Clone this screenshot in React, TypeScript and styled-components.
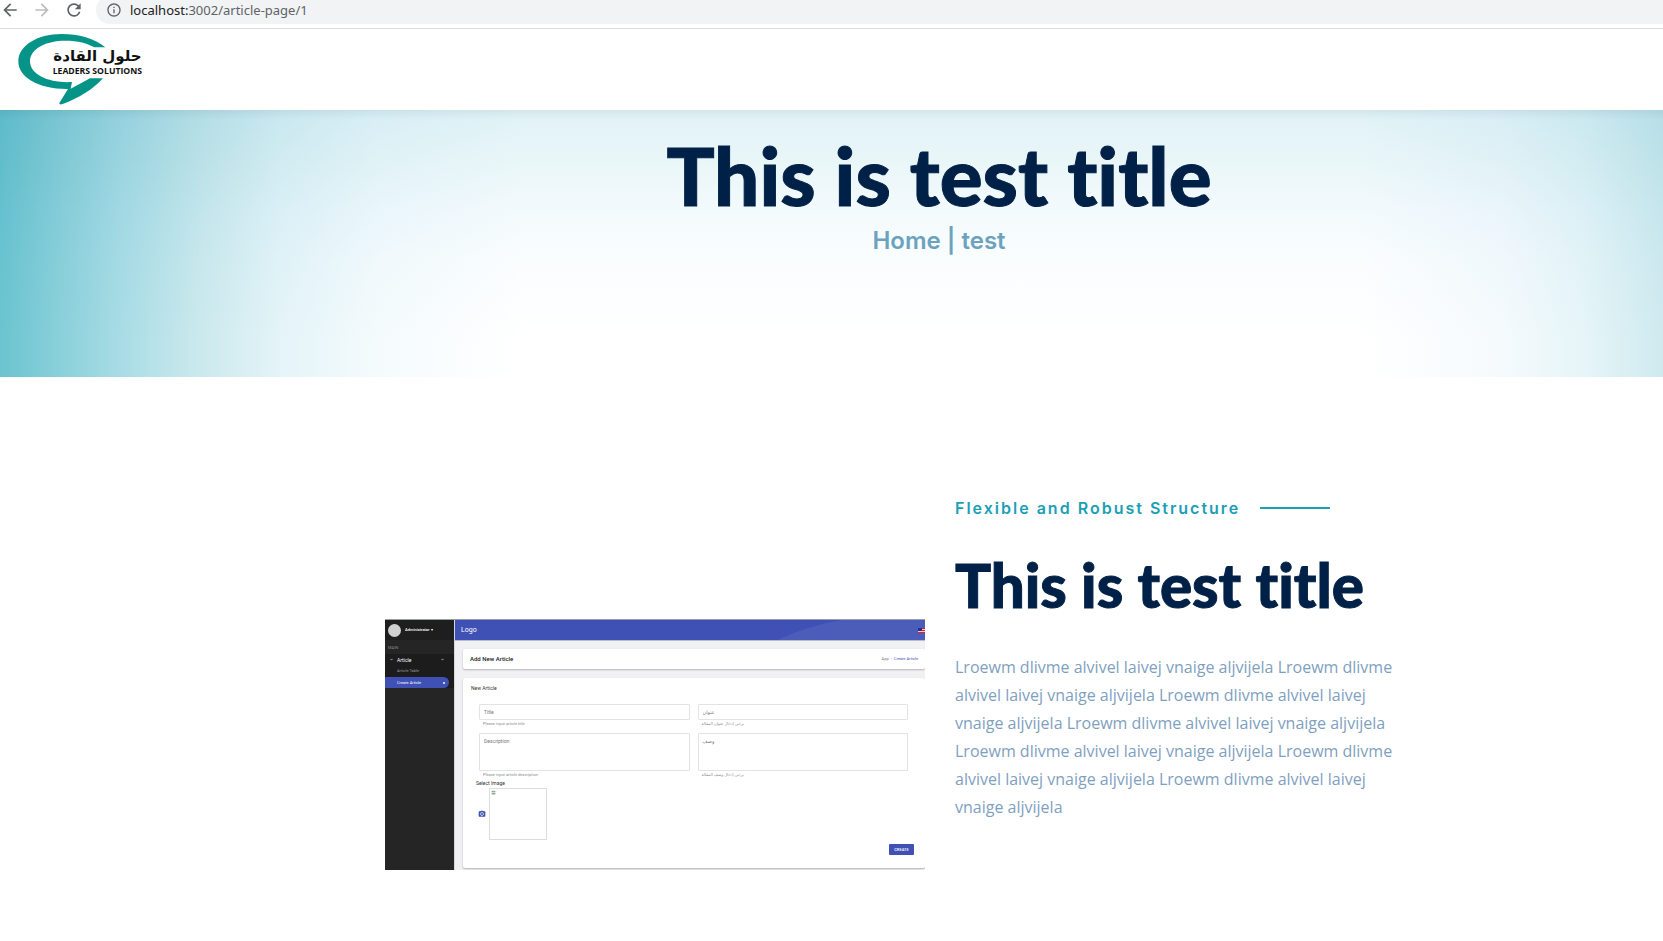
import React from 'react';
import styled, { createGlobalStyle } from 'styled-components';
import {
  MdArrowBack,
  MdArrowForward,
  MdRefresh,
  MdInfoOutline,
  MdPhotoCamera,
  MdKeyboardArrowDown,
  MdBrokenImage,
} from 'react-icons/md';

const GlobalStyle = createGlobalStyle`
  *, *::before, *::after { box-sizing: border-box; }
  body {
    margin: 0;
    background: #fff;
    color: #002147;
    font-family: Inter, "Liberation Sans", sans-serif;
    overflow-x: hidden;
  }
  h1, h2, h3, p, nav, figure { margin: 0; }
  button, input, textarea { font: inherit; }
`;

/* ---------- browser bar ---------- */

const BrowserBar = styled.div`
  display: flex;
  align-items: flex-start;
  height: 29px;
  overflow: hidden;
  border-bottom: 1px solid #dadce0;
`;

const NavButtons = styled.div`
  display: flex;
  gap: 12px;
  width: 96px;
`;

const NavButton = styled.button`
  display: flex;
  padding: 0;
  border: 0;
  background: none;
  color: #5f6368;
  font-size: 20px;
  &:disabled { color: #bbbdc0; }
`;

const AddressBar = styled.div`
  flex: 1;
  display: flex;
  align-items: center;
  gap: 8px;
  height: 28px;
  margin-top: -4px;
  padding-left: 10px;
  border-radius: 14px 0 0 14px;
  background: #f1f3f4;
  color: #5f6368;
  font: 13px/20px "Noto Sans", sans-serif;
  svg { font-size: 16px; }
  b { color: #202124; font-weight: 400; }
`;

/* ---------- site header and hero ---------- */

const SiteHeader = styled.header`
  height: 81px;
`;

const LogoLink = styled.a`
  display: inline-block;
`;

const Hero = styled.section`
  min-height: 267px;
  padding: 25px 0 0 215px;
  text-align: center;
  background:
    linear-gradient(to bottom, rgba(0, 40, 50, 0.06), transparent 10px),
    linear-gradient(to bottom, #e0f2f7, #e9f6f8 50px, #f3fafd 100px, #fafdfe 150px, #fff 230px),
    linear-gradient(to right, #6ac4d0, #8ad0da 60px, #a8dce5 120px, #cbe9ed 200px, #e4f4f8 280px, #f5fbfd 380px, #fff 520px),
    linear-gradient(to left, #cfeaef, #e6f5f8 80px, #f5fafd 160px, #fff 300px);
  background-blend-mode: multiply;
`;

const HeroTitle = styled.h1`
  font: 900 80px/80px Lato, sans-serif;
  font-variant-ligatures: none;
  -webkit-text-stroke: 1px currentColor;
`;

const Breadcrumb = styled.nav`
  margin-top: 12px;
  color: #6ba3be;
  font-size: 24px;
  font-weight: 600;
  line-height: 28px;
  a { color: inherit; text-decoration: none; }
`;

/* ---------- article ---------- */

const ArticleSection = styled.main`
  padding: 119px 0 71px 215px;
`;

const ArticleGrid = styled.article`
  display: grid;
  grid-template-columns: 1fr 1fr;
  align-items: end;
  gap: 30px;
  max-width: 1140px;
  margin: 0 auto;
  padding: 0 14px 0 16px;
`;

const ArticleText = styled.div`
  max-width: 450px;
  padding-bottom: 49px;
`;

const Eyebrow = styled.p`
  display: flex;
  align-items: center;
  gap: 20px;
  color: #1b9fb6;
  font-size: 16px;
  font-weight: 600;
  line-height: 24px;
  letter-spacing: 2px;
  &::after {
    content: "";
    width: 70px;
    height: 2px;
    background: currentColor;
  }
`;

const ArticleTitle = styled.h2`
  margin-top: 29px;
  font: 900 60px/72px Lato, sans-serif;
  font-variant-ligatures: none;
  -webkit-text-stroke: 1px currentColor;
`;

const ArticleBody = styled.p`
  margin-top: 32px;
  color: #7f9fbf;
  font: 16px/28px "Open Sans", sans-serif;
`;

/* ---------- dashboard preview ---------- */

const Preview = styled.figure`
  display: grid;
  grid-template-columns: 69px 1fr;
  height: 251px;
  overflow: hidden;
  border-top: 1px solid #9a9dab;
  background: #f1f1f3;
  color: #333;
  font: 5px/6px Roboto, sans-serif;
`;

const Sidebar = styled.aside`
  background: #252525;
  color: #ddd;
`;

const Profile = styled.div`
  display: flex;
  align-items: center;
  gap: 4px;
  height: 20px;
  padding-left: 3px;
  background: #1e1e1e;
  color: #fff;
  font-weight: 500;
  font-size: 4px;
`;

const Avatar = styled.span`
  width: 13px;
  height: 13px;
  border-radius: 50%;
  background: #d0d0d0;
`;

const MenuHeading = styled.p`
  height: 14px;
  padding: 5px 3px;
  color: #8a8a8a;
  font-size: 4px;
  line-height: 6px;
`;

const MenuGroup = styled.div`
  background: #1c1c1c;
`;

const MenuItem = styled.a<{ $kind?: 'parent' | 'active' }>`
  display: flex;
  align-items: center;
  justify-content: space-between;
  height: ${(p) => (p.$kind ? 11 : 12)}px;
  margin-right: 5px;
  padding: 0 4px 0 12px;
  color: ${(p) => (p.$kind ? '#fff' : '#9a9a9a')};
  background: ${(p) => (p.$kind === 'active' ? '#3f51b5' : 'none')};
  border-radius: 0 6px 6px 0;
  font-size: ${(p) => (p.$kind === 'parent' ? 5 : 4)}px;
  text-decoration: none;
  span { display: flex; align-items: center; gap: 3px; }
  ${(p) => p.$kind === 'parent' && 'padding-left: 4px;'}
`;

const Dot = styled.i`
  width: 2px;
  height: 2px;
  border-radius: 50%;
  background: #fff;
`;

const Panel = styled.div`
  min-width: 0;
  border-left: 1px solid #d8d8da;
`;

const AppBar = styled.div`
  display: flex;
  align-items: center;
  justify-content: space-between;
  height: 21px;
  padding-left: 6px;
  border-bottom: 1px solid #b9bcc9;
  background: radial-gradient(ellipse 190px 62px at 483px 53px, #4c5db9 99%, #3f51b5 100%);
  color: #fff;
  font-size: 7px;
  line-height: 8px;
`;

const Card = styled.section`
  margin: 8px 0 0 8px;
  border-radius: 2px;
  background: #fff;
  box-shadow: 0 1px 2px rgba(0, 0, 0, 0.25);
`;

const TitleCard = styled(Card)`
  display: flex;
  align-items: center;
  justify-content: space-between;
  height: 20px;
  padding: 0 7px;
`;

const CardTitle = styled.h3`
  color: #222;
  font-size: 6px;
  font-weight: 500;
  line-height: 8px;
`;

const Trail = styled.span`
  color: #777;
  font-size: 4px;
  a { color: #3f51b5; text-decoration: none; }
`;

const FormCard = styled(Card).attrs({ as: 'form' })`
  height: 190px;
  margin-top: 9px;
  padding: 7px 11px 0 8px;
`;

const FormHeading = styled.h3`
  font-size: 5px;
  font-weight: 400;
  line-height: 6px;
`;

const Fields = styled.div`
  display: grid;
  grid-template-columns: 1fr 1fr;
  gap: 5px 8px;
  padding: 13px 6px 0 8px;
`;

const Field = styled.label`
  display: block;
  color: #8b8b8b;
  font: 4px/8px Roboto, "DejaVu Sans", sans-serif;
  span { display: block; padding-left: 4px; }
`;

const fieldBox = `
  display: block;
  width: 100%;
  padding: 0 4px;
  border: 1px solid #e3e3e5;
  border-radius: 1px;
  background: #fff;
  color: #666;
  font: 5px/14px Roboto, "DejaVu Sans", sans-serif;
  resize: none;
  outline: 0;
  &::placeholder { color: #777; opacity: 1; }
`;

const TextInput = styled.input`${fieldBox} height: 16px;`;
const TextArea = styled.textarea`${fieldBox} height: 38px;`;

const ImageLabel = styled.p`
  padding: 1px 0 0 5px;
  font-size: 5px;
  line-height: 6px;
`;

const ImagePicker = styled.div`
  display: flex;
  align-items: center;
  gap: 3px;
  padding: 2px 0 0 7px;
`;

const CameraButton = styled.button`
  display: flex;
  padding: 0;
  border: 0;
  background: none;
  color: #3f51b5;
  font-size: 8px;
`;

const ImageFrame = styled.div`
  width: 58px;
  height: 52px;
  padding: 1px;
  border: 1px solid #dcdcdc;
  color: #8fa690;
  line-height: 0;
`;

const Actions = styled.div`
  display: flex;
  justify-content: flex-end;
  padding-top: 4px;
`;

const CreateButton = styled.button`
  width: 25px;
  height: 11px;
  padding: 0;
  border: 0;
  border-radius: 1px;
  background: #3f51b5;
  color: #fff;
  font: 500 4px/11px Roboto, sans-serif;
`;

function Logo() {
  return (
    <svg width="160" height="81" viewBox="0 27 480 243" role="img" aria-label="Leaders Solutions">
      <path
        fill="#069489"
        d="M316 82C285 55 235 42 185 42C110 42 55 78 55 124C55 172 115 208 204 207L178 249Q177 256 188 252C235 235 280 208 309 175L270 175C255 184 235 194 212 206L216 186C150 190 90 166 90 124C90 85 140 62 195 62C235 62 262 70 283 82Z"
      />
      <text x="160" y="122" fontFamily="DejaVu Sans, sans-serif" fontWeight="700" fontSize="45" fill="#111" direction="ltr">
        حلول القادة
      </text>
      <text x="158" y="162" fontFamily="Open Sans, sans-serif" fontWeight="700" fontSize="26" fill="#111">
        LEADERS SOLUTIONS
      </text>
    </svg>
  );
}

function Flag() {
  return (
    <svg width="7" height="5" viewBox="0 0 7 5" aria-hidden="true">
      <rect width="7" height="5" fill="#f4c6cc" />
      <path d="M0 .5H7M0 2.5H7M0 4.5H7" stroke="#e0202c" />
      <rect width="4" height="3" fill="#2a2f86" />
    </svg>
  );
}

function Dashboard() {
  return (
    <Preview>
      <Sidebar>
        <Profile>
          <Avatar />
          <span>Administrator ▾</span>
        </Profile>
        <MenuHeading>MAIN</MenuHeading>
        <MenuGroup>
          <MenuItem href="#article" $kind="parent">
            <span><MdKeyboardArrowDown /> Article</span>
            <MdKeyboardArrowDown />
          </MenuItem>
          <MenuItem href="#table">Article Table</MenuItem>
          <MenuItem href="#create" $kind="active">Create Article <Dot /></MenuItem>
        </MenuGroup>
      </Sidebar>
      <Panel>
        <AppBar>
          <span>Logo</span>
          <Flag />
        </AppBar>
        <TitleCard>
          <CardTitle>Add New Article</CardTitle>
          <Trail>App &nbsp;›&nbsp; <a href="#create">Create Article</a></Trail>
        </TitleCard>
        <FormCard>
          <FormHeading>New Article</FormHeading>
          <Fields>
            <Field>
              <TextInput placeholder="Title" />
              <span>Please input article title</span>
            </Field>
            <Field>
              <TextInput placeholder="عنوان" />
              <span>يرجى إدخال عنوان المقالة</span>
            </Field>
            <Field>
              <TextArea placeholder="Description" />
              <span>Please input article description</span>
            </Field>
            <Field>
              <TextArea placeholder="وصف" />
              <span>يرجى إدخال وصف المقالة</span>
            </Field>
          </Fields>
          <ImageLabel>Select Image</ImageLabel>
          <ImagePicker>
            <CameraButton type="button" aria-label="Select image"><MdPhotoCamera /></CameraButton>
            <ImageFrame><MdBrokenImage size={5} /></ImageFrame>
          </ImagePicker>
          <Actions>
            <CreateButton type="button">CREATE</CreateButton>
          </Actions>
        </FormCard>
      </Panel>
    </Preview>
  );
}

const sentence = 'Lroewm dlivme alvivel laivej vnaige aljvijela';

export default function App() {
  return (
    <>
      <GlobalStyle />
      <BrowserBar>
        <NavButtons>
          <NavButton aria-label="Back"><MdArrowBack /></NavButton>
          <NavButton aria-label="Forward" disabled><MdArrowForward /></NavButton>
          <NavButton aria-label="Reload"><MdRefresh /></NavButton>
        </NavButtons>
        <AddressBar>
          <MdInfoOutline />
          <span><b>localhost:</b>3002/article-page/1</span>
        </AddressBar>
      </BrowserBar>
      <SiteHeader>
        <LogoLink href="/"><Logo /></LogoLink>
      </SiteHeader>
      <Hero>
        <HeroTitle>This is test title</HeroTitle>
        <Breadcrumb aria-label="Breadcrumb"><a href="/">Home</a> | test</Breadcrumb>
      </Hero>
      <ArticleSection>
        <ArticleGrid>
          <Dashboard />
          <ArticleText>
            <Eyebrow>Flexible and Robust Structure</Eyebrow>
            <ArticleTitle>This is test title</ArticleTitle>
            <ArticleBody>{Array(7).fill(sentence).join(' ')}</ArticleBody>
          </ArticleText>
        </ArticleGrid>
      </ArticleSection>
    </>
  );
}
